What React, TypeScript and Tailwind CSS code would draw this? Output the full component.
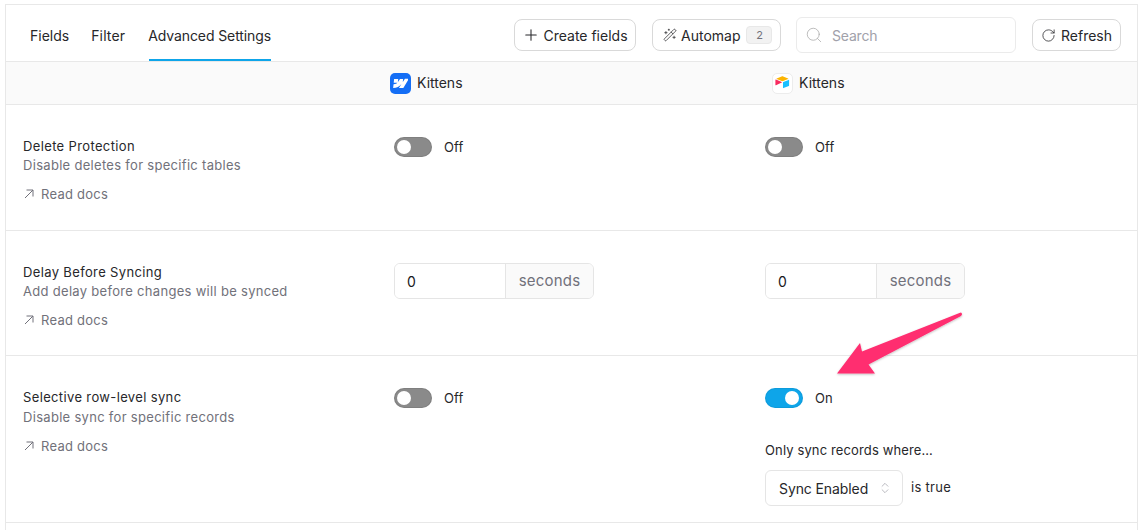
import React from "react";
import { Plus, WandSparkles, Search, RotateCw, ChevronsUpDown } from "lucide-react";

function WebflowLogo() {
  return (
    <span className="flex h-[21px] w-[21px] items-center justify-center rounded-[5px] bg-[#146ef5]">
      <svg width="15" height="11" viewBox="0 0 15 11" fill="#fff">
        <path d="M15 0.3 10.4 9.6H6L8 5.7H7.9C6.3 7.9 3.8 9.3 0.2 9.6V5.8C0.2 5.8 2.5 5.7 3.9 4.2H0.2V0.4H4.3V3.5H4.4L6.1 0.4H9.2V3.5H9.3L11 0.3Z" transform="skewX(-6) translate(1 0.5)" />
      </svg>
    </span>
  );
}

function AirtableLogo() {
  return (
    <span className="flex h-[21px] w-[21px] items-center justify-center rounded-[5px] border border-[#ececec] bg-white">
      <svg width="15" height="14" viewBox="0 0 15 14">
        <path d="M6.6.5 1.7 2.5c-.3.1-.3.5 0 .6l4.9 2c.5.2 1.1.2 1.6 0l4.9-2c.3-.1.3-.5 0-.6L8.2.5C7.7.3 7.100.3 6.600.5Z" fill="#fcb400" />
        <path d="M8 6.300V11.800c0 .3.300.400.500.300l5.300-2.100c.200-.100.300-.200.300-.400V4.200c0-.300-.300-.400-.500-.300L8.300 5.900c-.200.100-.300.200-.300.400Z" fill="#18bfff" />
        <path d="M6.800 6.500 5.200 7.300 1 9.300c-.300.100-.600-.100-.600-.400V3.900c0-.100.100-.200.200-.300.100 0 .200-.100.300 0L6.800 6c.200.100.200.400 0 .500Z" fill="#f82b60" />
      </svg>
    </span>
  );
}

function Toggle({ on }: { on?: boolean }) {
  return (
    <div className="flex items-center gap-[12px]">
      <span
        className={
          on
            ? "flex h-[20px] w-[38px] items-center justify-end rounded-full bg-[#0ea5e9] pr-[4px] shadow-[inset_0_0_0_1px_rgba(0,0,0,0.06)]"
            : "flex h-[20px] w-[38px] items-center rounded-full bg-[#8a8a8a] pl-[3px] shadow-[inset_0_0_0_1px_rgba(0,0,0,0.08)]"
        }
      >
        <span className="h-[14px] w-[14px] rounded-full bg-white" />
      </span>
      <span className="text-[13px] leading-[20px] tracking-[0.1px] text-[#27272a]">{on ? "On" : "Off"}</span>
    </div>
  );
}

function Info({ title, desc, shift }: { title: string; desc: string; shift?: boolean }) {
  return (
    <div className="w-[372px] shrink-0 pl-[17px]">
      <div className="text-[13px] leading-[20px] tracking-[0.36px] text-[#27272a]">{title}</div>
      <div className={`text-[13px] leading-[18px] tracking-[0.3px] text-[#71717a] ${shift ? "mt-[1px]" : ""}`}>{desc}</div>
      <div className="mt-[11px] flex items-center gap-[7px] pl-[1px] text-[13px] leading-[18px] tracking-[0.25px] text-[#71717a]">
        <svg width="10" height="10" viewBox="0 0 10 10" fill="none" stroke="#71717a" strokeWidth="1">
          <path d="M1 9 9 1M2.500 1H9V7.500" />
        </svg>
        <span>Read docs</span>
      </div>
    </div>
  );
}

function Seconds() {
  return (
    <div className="flex h-[36px] w-[200px] overflow-hidden rounded-[6px] border border-[#e5e5e5]">
      <div className="flex w-[111px] items-center border-r border-[#e5e5e5] bg-white pl-[12px] text-[14px] text-[#18181b]">0</div>
      <div className="flex flex-1 items-center justify-center bg-[#fafafa] text-[15px] tracking-[0.2px] text-[#71717a]">seconds</div>
    </div>
  );
}

function Btn({ children, w }: { children: React.ReactNode; w: string }) {
  return (
    <div className={`flex h-[32px] items-center rounded-[8px] border border-[#d9d9d9] bg-white text-[14px] text-[#27272a] ${w}`}>
      {children}
    </div>
  );
}

export default function App() {
  return (
    <div className="relative h-[530px] w-[1142px] overflow-hidden bg-white pl-[5px] pt-[4px] font-['Inter',sans-serif]">
      <div className="h-[526px] w-[1133px] border-x border-t border-[#e8e8e8]">
        <div className="flex h-[57px] items-stretch justify-between border-b border-[#e8e8e8] pl-[24px] pr-[16px]">
          <div className="flex items-stretch gap-[22px] text-[14px] text-[#27272a]">
            <span className="flex items-center pt-[4px]">Fields</span>
            <span className="flex items-center pt-[4px] tracking-[0.15px]">Filter</span>
            <span className="relative ml-[1px] flex items-center pt-[4px] tracking-[-0.1px]">
              Advanced Settings
              <span className="absolute bottom-0 left-[1px] right-0 h-[2px] bg-[#0ea5e9]" />
            </span>
          </div>
          <div className="flex items-center gap-[16px] pt-[4px]">
            <Btn w="w-[122px] justify-center gap-[3px]">
              <Plus size={18} strokeWidth={1.4} />
              Create fields
            </Btn>
            <Btn w="w-[129px] mr-[-1px] pl-[10px] gap-[4px]">
              <WandSparkles size={14} strokeWidth={1.25} />
              <span>Automap</span>
              <span className="ml-[2px] flex h-[18px] w-[26px] items-center justify-center rounded-[4px] border border-[#e8e8e8] bg-[#f2f2f2] text-[11px] text-[#71717a]">2</span>
            </Btn>
            <div className="flex h-[36px] w-[220px] items-center gap-[9px] rounded-[6px] border border-[#ebebeb] pl-[8px] text-[14px] tracking-[-0.2px] text-[#a1a1aa]">
              <Search size={18} strokeWidth={1} className="text-[#a8a8a8]" />
              Search
            </div>
            <Btn w="w-[89px] justify-center gap-[5px]">
              <RotateCw size={15} strokeWidth={1.25} />
              Refresh
            </Btn>
          </div>
        </div>

        <div className="flex h-[43px] items-center border-b border-[#e8e8e8] bg-[#fafafa] text-[14px] text-[#27272a]">
          <div className="ml-[384px] flex w-[382px] items-center gap-[6px]">
            <WebflowLogo />
            <span className="pb-[2px]">Kittens</span>
          </div>
          <div className="flex items-center gap-[6px]">
            <AirtableLogo />
            <span className="pb-[2px]">Kittens</span>
          </div>
        </div>

        <div className="flex h-[126px] border-b border-[#e8e8e8] pt-[31px]">
          <Info title="Delete Protection" desc="Disable deletes for specific tables" />
          <div className="w-[371px] pl-[16px] pt-[1px]"><Toggle /></div>
          <div className="pl-[16px] pt-[1px]"><Toggle /></div>
        </div>

        <div className="flex h-[125px] border-b border-[#e8e8e8] pt-[31px]">
          <Info title="Delay Before Syncing" desc="Add delay before changes will be synced" />
          <div className="w-[371px] pl-[16px] pt-[1px]"><Seconds /></div>
          <div className="pl-[16px] pt-[1px]"><Seconds /></div>
        </div>

        <div className="flex h-[167px] border-b border-[#e8e8e8] pt-[31px]">
          <Info title="Selective row-level sync" desc="Disable sync for specific records" shift />
          <div className="w-[371px] pl-[16px] pt-[1px]"><Toggle /></div>
          <div className="pl-[16px] pt-[1px]">
            <Toggle on />
            <div className="mt-[33px] text-[13px] leading-[18px] tracking-[0.13px] text-[#27272a]">Only sync records where…</div>
            <div className="mt-[11px] flex items-center gap-[8px] text-[13px] tracking-[0.3px] text-[#27272a]">
              <div className="flex h-[36px] w-[138px] items-center justify-between rounded-[6px] border border-[#e5e5e5] pl-[13px] pr-[10px] text-[14px] tracking-[-0.1px]">
                Sync Enabled
                <ChevronsUpDown size={14} strokeWidth={1.25} className="text-[#a1a1aa]" />
              </div>
              is true
            </div>
          </div>
        </div>
      </div>

      <svg className="absolute left-[820px] top-[300px]" width="160" height="90" viewBox="820 300 160 90">
        <defs>
          <filter id="s" x="-20%" y="-20%" width="140%" height="150%">
            <feDropShadow dx="0" dy="1" stdDeviation="1" floodColor="#000" floodOpacity="0.25" />
          </filter>
        </defs>
        <path
          d="M961 312.500 Q963 314 961 316 L868.500 364.500 L875 373.500 L837 373.500 L860 343 L862 351.500 L959.500 313 Z"
          fill="#ff2d6f"
          filter="url(#s)"
        />
      </svg>
    </div>
  );
}
